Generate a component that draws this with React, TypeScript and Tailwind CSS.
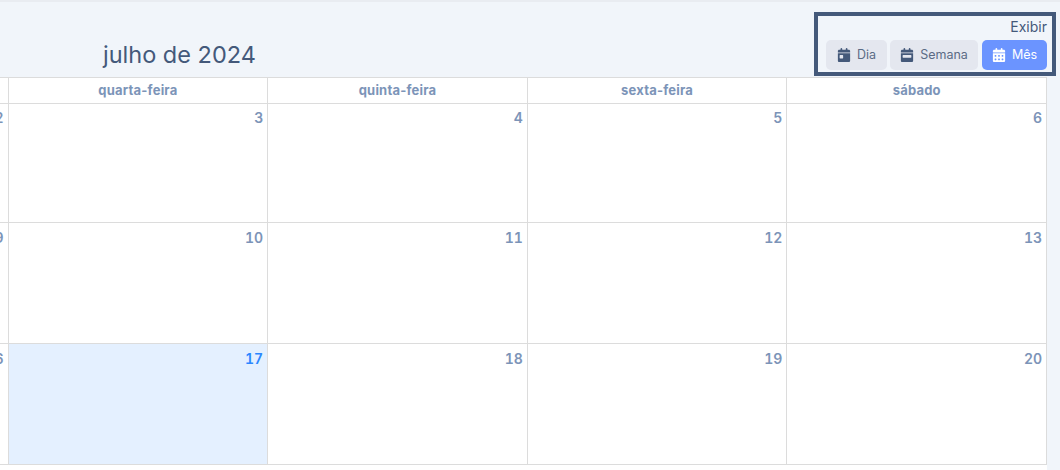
import React from "react";
import { FaCalendarDay, FaCalendarWeek, FaCalendarDays } from "react-icons/fa6";

const heads = ["terça-feira", "quarta-feira", "quinta-feira", "sexta-feira", "sábado"];
const rows = [
  ["2", "3", "4", "5", "6"],
  ["9", "10", "11", "12", "13"],
  ["16", "17", "18", "19", "20"],
];

export default function App() {
  return (
    <div className="w-[1060px] h-[470px] overflow-hidden bg-[#f1f5fa] font-['Inter',sans-serif] flex flex-col">
      <div className="h-[2px] bg-[#e9ecf1] shrink-0" />
      <header className="h-[75px] shrink-0 flex items-start justify-between">
        <h1 className="ml-[103px] mt-[38px] text-[23.5px] leading-[30px] font-normal text-[#44597a]">julho de 2024</h1>
        <div className="mt-[10px] mr-[4px] w-[242px] h-[64px] border-4 border-[#44597a] pl-[8px] pr-[5px] flex flex-col">
          <div className="text-right text-[14px] leading-[16px] mt-[3px] text-[#44597a]">Exibir</div>
          <div className="mt-[5px] flex">
            <button className="w-[61px] h-[30px] rounded-[5px] bg-[#e4e7ef] text-[#5b6b85] text-[12.5px] flex items-center justify-center gap-[6px]">
              <FaCalendarDay className="text-[14px] text-[#44597a]" />Dia
            </button>
            <button className="ml-[3px] w-[88px] h-[30px] rounded-[5px] bg-[#e4e7ef] text-[#5b6b85] text-[12.5px] flex items-center justify-center gap-[6px]">
              <FaCalendarWeek className="text-[14px] text-[#44597a]" />Semana
            </button>
            <button className="ml-[4px] w-[65px] h-[30px] rounded-[5px] bg-[#6b94ff] text-white text-[12.5px] flex items-center justify-center gap-[6px]">
              <FaCalendarDays className="text-[14px]" />Mês
            </button>
          </div>
        </div>
      </header>
      <div className="ml-[-251px] w-[1298px] bg-white rounded-tr-[3px] flex-1">
        <div className="grid grid-cols-5 h-[27px] border-t border-b border-[#dcdcdc]">
          {heads.map((h) => (
            <div key={h} className="border-r border-[#dcdcdc] text-center text-[13px] tracking-[0.2px] leading-[25px] font-bold text-[#7c94b8]">{h}</div>
          ))}
        </div>
        {rows.map((r, i) => (
          <div key={i} className={i === 0 ? "grid grid-cols-5 h-[119px] border-b border-[#dcdcdc]" : "grid grid-cols-5 h-[121px] border-b border-[#dcdcdc]"}>
            {r.map((d) => (
              <div
                key={d}
                className={
                  "border-r border-[#dcdcdc] text-right pr-[4px] text-[14px] tabular-nums leading-[16px] font-semibold " +
                  (i === 0 ? "pt-[6px] " : "pt-[7px] ") +
                  (d === "17" ? "bg-[#e4f0ff] text-[#2b87ff]" : "text-[#7c94b8]")
                }
              >
                {d}
              </div>
            ))}
          </div>
        ))}
      </div>
    </div>
  );
}
